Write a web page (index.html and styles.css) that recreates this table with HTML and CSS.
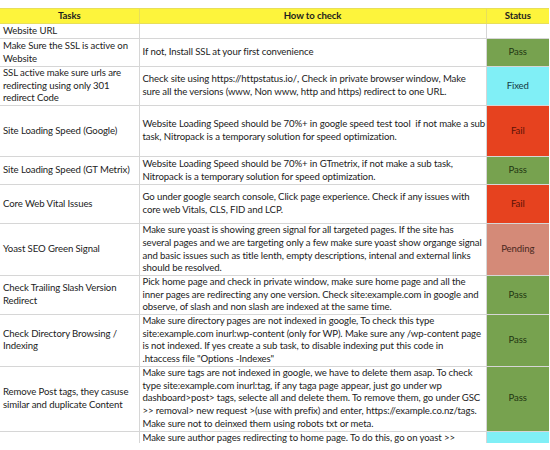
FILE: index.html
```html
<!DOCTYPE html>
<html>
<head>
<meta charset="utf-8">
<link rel="stylesheet" href="styles.css">
</head>
<body>
<div class="frame">
<table class="sheet">
  <colgroup><col class="c1"><col class="c2"><col class="c3"></colgroup>
  <thead>
    <tr class="hdr"><th>Tasks</th><th>How to check</th><th>Status</th></tr>
  </thead>
  <tbody>
    <tr class="h15"><td>Website URL</td><td></td><td></td></tr>
    <tr class="h28"><td>Make Sure the SSL is active on<br>Website</td><td>If not, Install SSL at your first convenience</td><td class="st pass">Pass</td></tr>
    <tr class="h38"><td>SSL active make sure urls are<br>redirecting using only 301<br>redirect Code</td><td>Check site using https://httpstatus.io/, Check in private browser window, Make<br>sure all the versions (www, Non www, http and https) redirect to one URL.</td><td class="st fixed">Fixed</td></tr>
    <tr class="h51"><td>Site Loading Speed (Google)</td><td>Website Loading Speed should be 70%+ in google speed test tool&nbsp; if not make a sub<br>task, Nitropack is a temporary solution for speed optimization.</td><td class="st fail">Fail</td></tr>
    <tr class="h28"><td>Site Loading Speed (GT Metrix)</td><td>Website Loading Speed should be 70%+ in GTmetrix, if not make a sub task,<br>Nitropack is a temporary solution for speed optimization.</td><td class="st pass">Pass</td></tr>
    <tr class="h39"><td>Core Web Vital Issues</td><td>Go under google search console, Click page experience. Check if any issues with<br>core web Vitals, CLS, FID and LCP.</td><td class="st fail">Fail</td></tr>
    <tr class="h51"><td>Yoast SEO Green Signal</td><td>Make sure yoast is showing green signal for all targeted pages. If the site has<br>several pages and we are targeting only a few make sure yoast show organge signal<br>and basic issues such as title lenth, empty descriptions, intenal and external links<br>should be resolved.</td><td class="st pending">Pending</td></tr>
    <tr class="h39"><td>Check Trailing Slash Version<br>Redirect</td><td>Pick home page and check in private window, make sure home page and all the<br>inner pages are redirecting any one version. Check site:example.com in google and<br>observe, of slash and non slash are indexed at the same time.</td><td class="st pass">Pass</td></tr>
    <tr class="h51"><td>Check Directory Browsing /<br>Indexing</td><td>Make sure directory pages are not indexed in google, To check this type<br>site:example.com inurl:wp-content (only for WP). Make sure any /wp-content page<br>is not indexed. If yes create a sub task, to disable indexing put this code in<br>.htaccess file "Options -Indexes"</td><td class="st pass">Pass</td></tr>
    <tr class="h65"><td>Remove Post tags, they casuse<br>similar and duplicate Content</td><td>Make sure tags are not indexed in google, we have to delete them asap. To check<br>type site:example.com inurl:tag, if any taga page appear, just go under wp<br>dashboard&gt;post&gt; tags, selecte all and delete them. To remove them, go under GSC<br>&gt;&gt; removal&gt; new request &gt;(use with prefix) and enter, https://example.co.nz/tags.<br>Make sure not to deinxed them using robots txt or meta.</td><td class="st pass">Pass</td></tr>
    <tr class="h14 cut"><td></td><td><div class="clip">Make sure author pages redirecting to home page. To do this, go on yoast &gt;&gt;</div></td><td class="st fixed"></td></tr>
  </tbody>
</table>
</div>
</body>
</html>
```

FILE: styles.css
```css
html, body {
  margin: 0;
  padding: 0;
  background: #ffffff;
}
body {
  padding-top: 8px;
  font-family: "Lato", "Open Sans", sans-serif;
  font-size: 9.6px;
  letter-spacing: -0.1px;
  color: #222222;
}
.frame {
  height: 435px;
  overflow: hidden;
}
.sheet {
  border-collapse: collapse;
  table-layout: fixed;
  width: 549px;
}
.c1 { width: 139px; }
.c2 { width: 347px; }
.c3 { width: 63px; }
.sheet th,
.sheet td {
  padding: 0 0 0 3px;
  line-height: 12.7px;
  white-space: nowrap;
  overflow: hidden;
  vertical-align: middle;
  text-align: left;
  border: 1px solid #d6d6d6;
}
.sheet tr > :first-child { border-left: none; }
.sheet tr > :last-child { border-right: none; }
.hdr { height: 15px; }
.hdr th {
  background: #fdf43c;
  font-weight: bold;
  text-align: center;
  padding: 0;
  color: #1e1e1e;
  border-color: #e8df5a;
}
.h14 { height: 14px; }
.h15 { height: 15px; }
.h28 { height: 28px; }
.h38 { height: 38px; }
.h39 { height: 39px; }
.h51 { height: 51px; }
.h65 { height: 65px; }
.cut td { vertical-align: top; border-bottom: none; }
.clip { height: 13px; overflow: hidden; padding-top: 0; line-height: 12px; }
.sheet td.st {
  text-align: center;
  padding: 0;
  border-left: 1px solid #c9c9c9;
}
.pass { background: #77a24f; color: #1f3612; }
.fixed { background: #80eff6; color: #163b45; }
.fail { background: #e6421f; color: #5c1207; }
.pending { background: #d48a78; color: #4a2820; }
```
